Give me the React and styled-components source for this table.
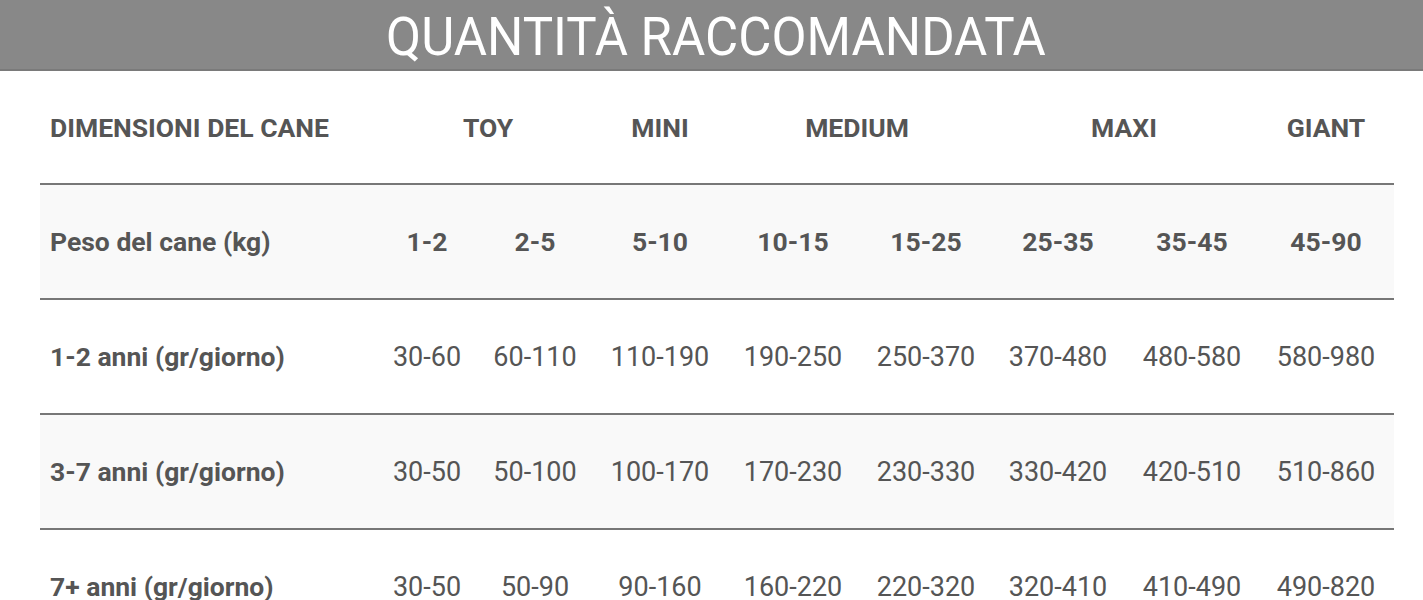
import React from "react";
import styled, { createGlobalStyle } from "styled-components";

const Global = createGlobalStyle`
  html, body { margin: 0; padding: 0; background: #fff; }
  body { font-family: Roboto, "Liberation Sans", Arial, sans-serif; }
`;

const Page = styled.div`
  display: flex;
  flex-direction: column;
`;

const TitleBar = styled.header`
  height: 69px;
  background: #888888;
  border-bottom: 2px solid #7a7a7a;
  display: flex;
  align-items: center;
  justify-content: center;
  padding-left: 9px;
`;

const Title = styled.h1`
  margin: 0;
  color: #fff;
  font-family: Roboto, sans-serif;
  font-weight: 400;
  font-size: 51px;
  line-height: 1;
  letter-spacing: 0;
  transform: translateY(2px) scaleY(1.06);
`;

const Wrap = styled.div`
  padding: 0 29px 0 40px;
`;

const Table = styled.table`
  width: 1354px;
  border-collapse: collapse;
  table-layout: fixed;
  color: #555;
  font-family: Roboto, sans-serif;
`;

const Row = styled.tr`
  background: ${(p) => (p.$shaded ? "#f9f9f9" : "#fff")};
  border-top: ${(p) => (p.$first ? "none" : "2px solid #777")};
`;

const Cell = styled.td`
  height: ${(p) => (p.$head ? "112px" : "113px")};
  padding: 0;
  text-align: ${(p) => (p.$label ? "left" : "center")};
  padding-left: ${(p) => (p.$label ? "10px" : "0")};
  font-size: ${(p) => (p.$bold ? "26.5px" : "27px")};
  font-weight: ${(p) => (p.$bold ? 700 : 400)};
  white-space: nowrap;
  vertical-align: middle;
`;

const widths = [340, 94, 122, 128, 138, 128, 136, 132, 136];

const weights = ["1-2", "2-5", "5-10", "10-15", "15-25", "25-35", "35-45", "45-90"];
const rows = [
  ["1-2 anni (gr/giorno)", ["30-60", "60-110", "110-190", "190-250", "250-370", "370-480", "480-580", "580-980"]],
  ["3-7 anni (gr/giorno)", ["30-50", "50-100", "100-170", "170-230", "230-330", "330-420", "420-510", "510-860"]],
  ["7+ anni (gr/giorno)", ["30-50", "50-90", "90-160", "160-220", "220-320", "320-410", "410-490", "490-820"]],
];

export default function App() {
  return (
    <Page>
      <Global />
      <TitleBar>
        <Title>QUANTITÀ RACCOMANDATA</Title>
      </TitleBar>
      <Wrap>
        <Table>
          <colgroup>
            {widths.map((w, i) => (
              <col key={i} style={{ width: w }} />
            ))}
          </colgroup>
          <tbody>
            <Row $first>
              <Cell $head $label $bold>DIMENSIONI DEL CANE</Cell>
              <Cell $head $bold colSpan={2}>TOY</Cell>
              <Cell $head $bold>MINI</Cell>
              <Cell $head $bold colSpan={2}>MEDIUM</Cell>
              <Cell $head $bold colSpan={2}>MAXI</Cell>
              <Cell $head $bold>GIANT</Cell>
            </Row>
            <Row $shaded>
              <Cell $label $bold>Peso del cane (kg)</Cell>
              {weights.map((w) => (
                <Cell key={w} $bold>{w}</Cell>
              ))}
            </Row>
            {rows.map(([label, vals], i) => (
              <Row key={label} $shaded={i % 2 === 1}>
                <Cell $label $bold>{label}</Cell>
                {vals.map((v, j) => (
                  <Cell key={j}>{v}</Cell>
                ))}
              </Row>
            ))}
          </tbody>
        </Table>
      </Wrap>
    </Page>
  );
}
